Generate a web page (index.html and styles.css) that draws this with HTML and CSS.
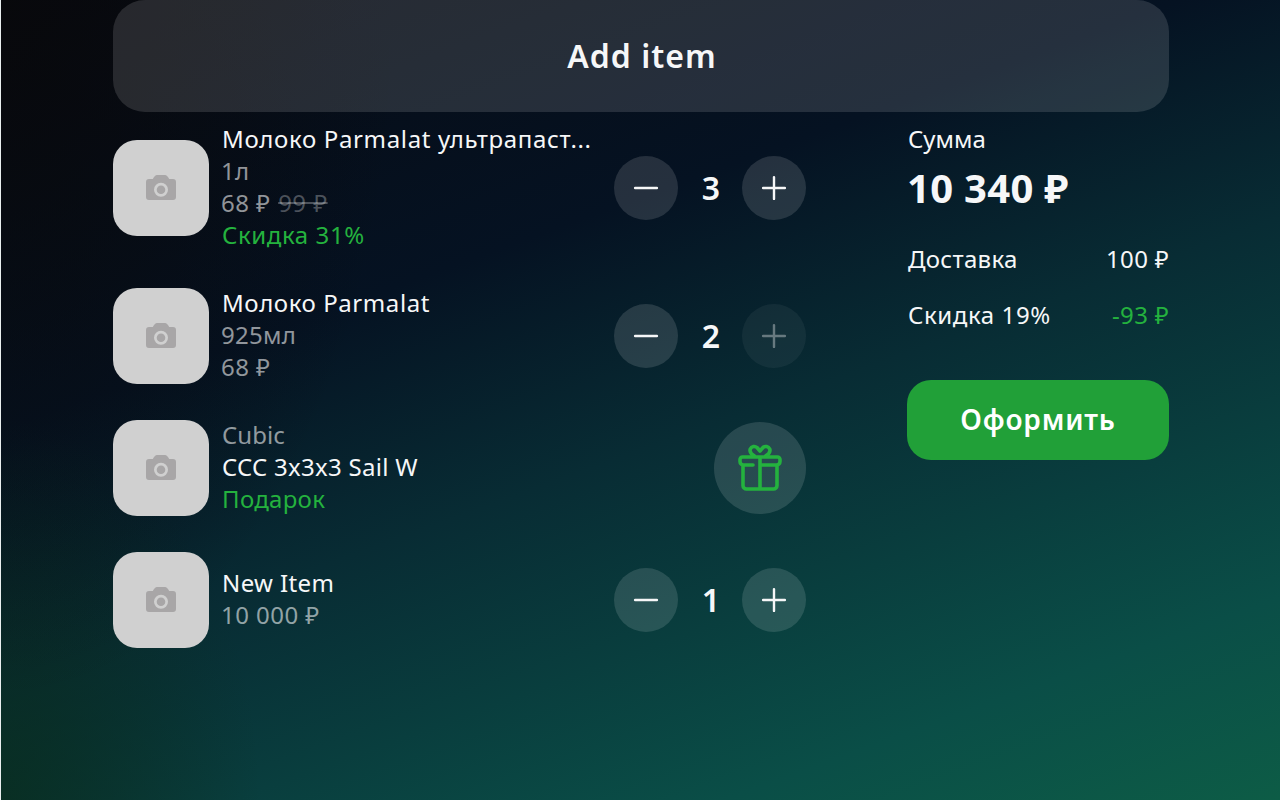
FILE: index.html
```
<!DOCTYPE html>
<html lang="ru">
<head>
<meta charset="utf-8">
<title>Cart</title>
<link rel="stylesheet" href="styles.css">
</head>
<body>
<svg width="0" height="0" class="sprite">
  <symbol id="camera" viewBox="0 0 36 36">
    <path fill="#a8a6a7" fill-rule="evenodd" d="M11 7 12 5.900Q12.800 5 14 5h8q1.200 0 2 .900l1 1.100 1.200 2H30a3 3 0 0 1 3 3v15a3 3 0 0 1-3 3H6a3 3 0 0 1-3-3V12a3 3 0 0 1 3-3h3.800zM18 12.700a7 7 0 1 0 0 14 7 7 0 0 0 0-14z"/>
    <circle cx="18" cy="19.700" r="4.300" fill="#a8a6a7"/>
  </symbol>
  <symbol id="minus" viewBox="0 0 32 32"><path d="M5.100 16h21.800"/></symbol>
  <symbol id="plus" viewBox="0 0 32 32"><path d="M5.100 16h21.800M16 5.100v21.800"/></symbol>
  <symbol id="gift" viewBox="0 0 48 48">
    <path d="M17 21H7.500a3.500 3.500 0 0 1-3.500-3.500v-2a2.500 2.500 0 0 1 2.500-2.500h35a2.500 2.500 0 0 1 2.500 2.500v2a3.500 3.500 0 0 1-3.500 3.500H24M7 21v20.500a3.500 3.500 0 0 0 3.500 3.500h27a3.500 3.500 0 0 0 3.500-3.500V21M24 13v32M18.500 12c-2.500-1.500-5.500-3.500-4.200-7 1.200-2.800 4.700-3.300 6.700-1.500L24 7l3-3.500c2-1.800 5.500-1.300 6.700 1.500 1.300 3.500-1.700 5.500-4.200 7"/>
  </symbol>
</svg>
<main class="page">
  <button class="add"><span>Add item</span></button>
  <div class="cart">
    <section class="items">
      <article class="item">
        <div class="thumb"><svg class="camera"><use href="#camera"/></svg></div>
        <div class="info">
          <div class="title long">Молоко Parmalat ультрапаст...</div>
          <div class="muted">1л</div>
          <div class="muted price">68 ₽ <s>99 ₽</s></div>
          <div class="green discount">Скидка 31%</div>
        </div>
        <div class="stepper"><button class="round"><svg><use href="#minus"/></svg></button><span class="qty">3</span><button class="round"><svg><use href="#plus"/></svg></button></div>
      </article>
      <article class="item">
        <div class="thumb"><svg class="camera"><use href="#camera"/></svg></div>
        <div class="info">
          <div class="title">Молоко Parmalat</div>
          <div class="muted">925мл</div>
          <div class="muted price">68 ₽</div>
        </div>
        <div class="stepper"><button class="round"><svg><use href="#minus"/></svg></button><span class="qty">2</span><button class="round off"><svg><use href="#plus"/></svg></button></div>
      </article>
      <article class="item">
        <div class="thumb"><svg class="camera"><use href="#camera"/></svg></div>
        <div class="info">
          <div class="muted brand">Cubic</div>
          <div class="model">CCC 3x3x3 Sail W</div>
          <div class="green">Подарок</div>
        </div>
        <div class="gift"><svg><use href="#gift"/></svg></div>
      </article>
      <article class="item">
        <div class="thumb"><svg class="camera"><use href="#camera"/></svg></div>
        <div class="info">
          <div class="new">New Item</div>
          <div class="muted price">10 000 ₽</div>
        </div>
        <div class="stepper"><button class="round"><svg><use href="#minus"/></svg></button><span class="qty">1</span><button class="round"><svg><use href="#plus"/></svg></button></div>
      </article>
    </section>
    <aside class="summary">
      <div class="sum">Сумма</div>
      <div class="total">10 340 ₽</div>
      <div class="row"><span>Доставка</span><span>100 ₽</span></div>
      <div class="row"><span class="discount">Скидка 19%</span><span class="green">-93 ₽</span></div>
      <button class="checkout"><span>Оформить</span></button>
    </aside>
  </div>
</main>
</body>
</html>
```
FILE: styles.css
```
* { box-sizing: border-box; }
body { margin: 0; padding-left: 1px; background: #e9efef; overflow: hidden; }
button { border: 0; padding: 0; font: inherit; color: inherit; }
.sprite { display: block; }
.page {
  height: 800px;
  padding: 0 111px 0 112px;
  font: 24px/32px "Noto Sans", sans-serif;
  letter-spacing: 0.3px;
  color: #f6f7f8;
  background:
    radial-gradient(400px 700px at 0 0, rgba(8, 8, 10, 0.8), rgba(8, 8, 10, 0)),
    radial-gradient(260px 380px at 0 100%, rgba(9, 44, 28, 0.75), rgba(9, 44, 28, 0)),
    linear-gradient(160deg, #070a12 0, #051222 34%, #082c34 54%, #0a4e47 84%, #0d5c46 100%);
}
.add {
  display: block;
  width: 100%;
  height: 112px;
  border-radius: 32px;
  background: rgba(255, 255, 255, 0.13);
  font-size: 32px;
  font-weight: 600;
  letter-spacing: 1px;
}
.add span { display: block; padding-left: 2px; }
.cart { display: flex; justify-content: space-between; padding-top: 12px; }
.items { width: 693px; display: flex; flex-direction: column; gap: 36px; }
.item { display: flex; align-items: center; }
.thumb {
  width: 96px; height: 96px; border-radius: 24px; background: #d0d0d0;
  display: flex; align-items: center; justify-content: center; flex: none;
}
.camera { width: 36px; height: 36px; }
.info { flex: 1; margin: -1px 0 1px; padding-left: 13px; white-space: nowrap; }
.title { letter-spacing: 0.58px; }
.title.long { letter-spacing: 0.66px; }
.discount { letter-spacing: 0.6px; }
.new { letter-spacing: 0.4px; }
.brand { letter-spacing: 0.1px; }
.info .muted:not(.brand) { margin-left: -1px; }
.price { letter-spacing: 0.45px; }
.muted { color: rgba(255, 255, 255, 0.56); }
.muted s { color: rgba(255, 255, 255, 0.28); margin-left: 1px; }
.green { color: #24b23e; }
.stepper { display: flex; align-items: center; }
.qty { width: 64px; padding-left: 2px; text-align: center; font-size: 32px; font-weight: 600; }
.round {
  width: 64px; height: 64px; border-radius: 50%; background: rgba(255, 255, 255, 0.13);
  display: flex; align-items: center; justify-content: center;
}
.round svg { width: 32px; height: 32px; fill: none; stroke: #f6f7f8; stroke-width: 2.4; stroke-linecap: round; }
.off { opacity: 0.4; }
.gift {
  width: 92px; height: 92px; border-radius: 50%; background: rgba(255, 255, 255, 0.13);
  display: flex; align-items: center; justify-content: center;
}
.gift svg { width: 48px; height: 48px; fill: none; stroke: #24b23e; stroke-width: 3.6; stroke-linecap: round; stroke-linejoin: round; }
.summary { width: 262px; margin-top: -1px; }
.sum { padding-left: 1px; letter-spacing: 0; }
.total { height: 48px; margin: 8px 0 32px; font-size: 40px; line-height: 50px; font-weight: 700; }
.row { display: flex; justify-content: space-between; margin-bottom: 24px; }
.row span:first-child { padding-left: 1px; }
.checkout {
  width: 100%; height: 80px; margin-top: 25px; border-radius: 24px;
  background: #21a038; color: #fff; font-size: 28px; font-weight: 600;
  letter-spacing: 0.8px;
}
.checkout span { display: block; margin-top: -3px; }
```
